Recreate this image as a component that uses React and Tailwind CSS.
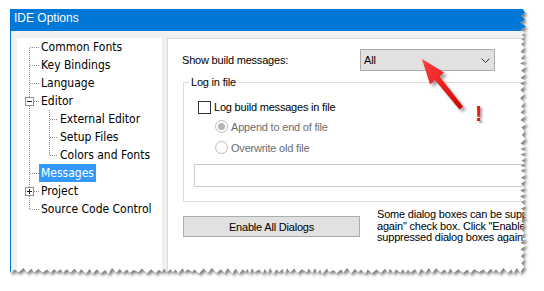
import React from 'react';

// Tree connector lines (dotted), drawn per row
const DOT = '#8c8c8c';

function Gutter({ level = 0, first, last, box, childLast }) {
  const w = level === 0 ? 22 : 41;
  return (
    <svg width={w} height={18} className="block shrink-0">
      <line x1="12.5" x2="12.5" y1={first ? 10 : 0} y2={last ? 10 : 18} stroke={DOT} strokeDasharray="1 1" />
      {level === 0 && <line x1="13" x2="22" y1="9.5" y2="9.5" stroke={DOT} strokeDasharray="1 1" />}
      {level === 1 && (
        <>
          <line x1="32.5" x2="32.5" y1="0" y2={childLast ? 10 : 18} stroke={DOT} strokeDasharray="1 1" />
          <line x1="33" x2="41" y1="9.5" y2="9.5" stroke={DOT} strokeDasharray="1 1" />
        </>
      )}
      {box && (
        <g>
          <rect x="8.5" y="5.5" width="8" height="8" fill="#fff" stroke="#919191" />
          <rect x="10" y="9" width="5" height="1" fill="#1e1e1e" />
          {box === 'plus' && <rect x="12" y="7" width="1" height="5" fill="#1e1e1e" />}
        </g>
      )}
    </svg>
  );
}

const rows = [
  { label: 'Common Fonts', first: true },
  { label: 'Key Bindings' },
  { label: 'Language' },
  { label: 'Editor', box: 'minus' },
  { label: 'External Editor', level: 1 },
  { label: 'Setup Files', level: 1 },
  { label: 'Colors and Fonts', level: 1, childLast: true },
  { label: 'Messages', selected: true },
  { label: 'Project', box: 'plus' },
  { label: 'Source Code Control', last: true },
];

function Tree() {
  return (
    <div className="w-[145px] shrink-0 bg-white flex flex-col text-[12px] text-black [font-family:'DejaVu_Sans_Condensed','DejaVu_Sans',sans-serif] [font-stretch:condensed]">
      {rows.map((r) => (
        <div key={r.label} className="flex items-center h-[18px] whitespace-nowrap">
          <Gutter {...r} />
          <span className={r.selected ? 'px-[2px] leading-[18px] bg-[#3399ff] text-white' : 'px-[2px] leading-[18px]'}>
            {r.label}
          </span>
        </div>
      ))}
    </div>
  );
}

function Radio({ checked, label }) {
  return (
    <div className="flex items-center h-[21px] pl-[31px]">
      <span className="w-[13px] h-[13px] rounded-full border border-[#bcbcbc] bg-[#fcfcfc] flex items-center justify-center">
        {checked && <span className="w-[7px] h-[7px] rounded-full bg-[#b4b4b4]" />}
      </span>
      <span className="ml-[3px] text-[#6d6d6d]">{label}</span>
    </div>
  );
}

function RightPanel() {
  return (
    <div className="flex-1 min-w-0 overflow-hidden bg-white border-l border-t border-[#d9d9d9] text-black text-[11px] tracking-[-0.2px] leading-[14px] whitespace-nowrap [font-family:'Liberation_Sans',Arial,sans-serif]">
      <div className="flex items-center h-[22px] mt-[10px] pl-[14px]">
        <span className="w-[178px] shrink-0">Show build messages:</span>
        <div className="w-[135px] h-[22px] shrink-0 border border-[#adadad] bg-[#e1e1e1] flex items-center justify-between pl-[3px] pr-[4px]">
          <span>All</span>
          <svg width="9" height="5" className="block">
            <polyline points="0.5,0.5 4.5,4.5 8.5,0.5" fill="none" stroke="#333" strokeWidth="1" />
          </svg>
        </div>
      </div>

      <fieldset className="ml-[15px] mt-[4px] w-[400px] border border-[#dcdcdc] pb-[14px]">
        <legend className="ml-[5px] px-[2px] leading-[14px]">Log in file</legend>
        <div className="flex items-center h-[18px] mt-[9px] pl-[14px]">
          <span className="w-[13px] h-[13px] border border-[#333333] bg-white" />
          <span className="ml-[3px]">Log build messages in file</span>
        </div>
        <Radio checked label="Append to end of file" />
        <Radio label="Overwrite old file" />
        <div className="mt-[6px] ml-[10px] h-[23px] w-[380px] border border-[#cccccc] bg-white" />
      </fieldset>

      <div className="flex items-start mt-[7px]">
        <div className="ml-[15px] mt-[7px] w-[177px] h-[21px] shrink-0 border border-[#adadad] bg-[#e1e1e1] flex items-center justify-center">
          Enable All Dialogs
        </div>
        <div className="ml-[17px] leading-[11.5px]">
          <div>Some dialog boxes can be suppressed by checking the "Do not show this message</div>
          <div>again" check box. Click "Enable All Dialogs" to display all the</div>
          <div>suppressed dialog boxes again.</div>
        </div>
      </div>
    </div>
  );
}

// torn right / bottom edge of the screenshot
function tornPath() {
  let s = 98765;
  const rnd = () => {
    s = (s * 16807) % 2147483647;
    return s / 2147483647;
  };
  const pts = [[10, 9], [523, 9]];
  let y = 9;
  let i = 0;
  while (y < 268) {
    y += 2 + rnd() * 2.5;
    i++;
    pts.push([523 + (i % 2 ? 2.2 : -2) + (rnd() - 0.5) * 2, Math.min(y, 271)]);
  }
  let x = 523;
  while (x > 14) {
    x -= 2 + rnd() * 3;
    i++;
    pts.push([Math.max(x, 10), 271 + (i % 2 ? 2 : -2) + (rnd() - 0.5) * 2]);
  }
  pts.push([10, 271]);
  return 'M' + pts.map((p) => p[0].toFixed(1) + ' ' + p[1].toFixed(1)).join('L') + 'Z';
}

const TORN = tornPath();
const ARROW = '422,59 444,72.5 439.5,76.5 463,106.5 459.5,109.5 435,80 430,84.5';

function Overlay() {
  return (
    <svg width="544" height="291" className="absolute inset-0 pointer-events-none">
      <defs>
        <filter id="blur" x="-10%" y="-10%" width="120%" height="120%">
          <feGaussianBlur stdDeviation="1.6" />
        </filter>
        <filter id="ablur" x="-30%" y="-30%" width="160%" height="160%">
          <feGaussianBlur stdDeviation="1.5" />
        </filter>
        <mask id="outside">
          <rect width="544" height="291" fill="#fff" />
          <path d={TORN} fill="#000" />
        </mask>
        <linearGradient id="red" x1="0" y1="0" x2="1" y2="1">
          <stop offset="0" stopColor="#ff4040" />
          <stop offset="1" stopColor="#d40000" />
        </linearGradient>
      </defs>
      <path d={'M0 0H544V291H0Z ' + TORN} fill="#fff" fillRule="evenodd" />
      <g mask="url(#outside)">
        <path d={TORN} transform="translate(2 2.5)" fill="#000" opacity="0.5" filter="url(#blur)" />
      </g>
      {/* red arrow */}
      <polygon points={ARROW} transform="translate(3 3)" fill="#000" opacity="0.35" filter="url(#ablur)" />
      <polygon points={ARROW} fill="url(#red)" />
    </svg>
  );
}

export default function App() {
  return (
    <div className="relative w-[544px] h-[291px] overflow-hidden bg-white pl-[10px] pt-[9px]">
      <div className="w-[518px] h-[266px] overflow-hidden flex flex-col border-l border-[#0078d7] bg-[#f0f0f0]">
        <div className="h-[22px] shrink-0 bg-[#0078d7] pl-[3px] pt-[1px] text-white text-[12px] leading-[16px] [font-family:'Liberation_Sans',sans-serif]">
          IDE Options
        </div>
        <div className="flex-1 min-h-0 flex pt-[7px] pl-[6px] gap-[5px]">
          <Tree />
          <RightPanel />
        </div>
      </div>
      <Overlay />
      <span className="absolute left-[475px] top-[103px] text-[22px] leading-[22px] font-bold text-[#e5141b] [font-family:'Liberation_Sans',sans-serif] [text-shadow:2px_2px_2px_rgba(0,0,0,0.35)]">
        !
      </span>
    </div>
  );
}
